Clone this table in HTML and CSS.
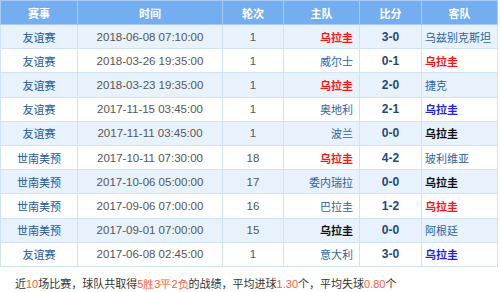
FILE: index.html
```html
<!DOCTYPE html>
<html>
  <head>
    <title>乌拉圭 近期战绩</title>
    <link rel="stylesheet" href="styles.css">
  </head>
  <body>
    <table class="record">
      <colgroup>
        <col class="c-event">
        <col class="c-time">
        <col class="c-round">
        <col class="c-home">
        <col class="c-score">
        <col class="c-away">
      </colgroup>
      <tr class="head">
        <th>赛事</th><th>时间</th><th>轮次</th><th>主队</th><th>比分</th><th>客队</th>
      </tr>
      <tr>
        <td class="event">友谊赛</td><td class="time">2018-06-08 07:10:00</td><td class="round">1</td>
        <td class="home"><span class="win">乌拉圭</span></td><td class="score">3-0</td><td class="away">乌兹别克斯坦</td>
      </tr>
      <tr>
        <td class="event">友谊赛</td><td class="time">2018-03-26 19:35:00</td><td class="round">1</td>
        <td class="home">威尔士</td><td class="score">0-1</td><td class="away"><span class="win">乌拉圭</span></td>
      </tr>
      <tr>
        <td class="event">友谊赛</td><td class="time">2018-03-23 19:35:00</td><td class="round">1</td>
        <td class="home"><span class="win">乌拉圭</span></td><td class="score">2-0</td><td class="away">捷克</td>
      </tr>
      <tr>
        <td class="event">友谊赛</td><td class="time">2017-11-15 03:45:00</td><td class="round">1</td>
        <td class="home">奥地利</td><td class="score">2-1</td><td class="away"><span class="lose">乌拉圭</span></td>
      </tr>
      <tr>
        <td class="event">友谊赛</td><td class="time">2017-11-11 03:45:00</td><td class="round">1</td>
        <td class="home">波兰</td><td class="score">0-0</td><td class="away"><span class="draw">乌拉圭</span></td>
      </tr>
      <tr>
        <td class="event">世南美预</td><td class="time">2017-10-11 07:30:00</td><td class="round">18</td>
        <td class="home"><span class="win">乌拉圭</span></td><td class="score">4-2</td><td class="away">玻利维亚</td>
      </tr>
      <tr>
        <td class="event">世南美预</td><td class="time">2017-10-06 05:00:00</td><td class="round">17</td>
        <td class="home">委内瑞拉</td><td class="score">0-0</td><td class="away"><span class="draw">乌拉圭</span></td>
      </tr>
      <tr>
        <td class="event">世南美预</td><td class="time">2017-09-06 07:00:00</td><td class="round">16</td>
        <td class="home">巴拉圭</td><td class="score">1-2</td><td class="away"><span class="win">乌拉圭</span></td>
      </tr>
      <tr>
        <td class="event">世南美预</td><td class="time">2017-09-01 07:00:00</td><td class="round">15</td>
        <td class="home"><span class="draw">乌拉圭</span></td><td class="score">0-0</td><td class="away">阿根廷</td>
      </tr>
      <tr>
        <td class="event">友谊赛</td><td class="time">2017-06-08 02:45:00</td><td class="round">1</td>
        <td class="home">意大利</td><td class="score">3-0</td><td class="away"><span class="lose">乌拉圭</span></td>
      </tr>
    </table>
    <p class="summary">
      近<em>10</em>场比赛，球队共取得<em>5胜3平2负</em>的战绩，平均进球<em>1.30</em>个，平均失球<em>0.80</em>个
    </p>
  </body>
</html>
```

FILE: styles.css
```css
body {
  margin: 0;
  background-color: #ffffff;
  font-family: "Noto Sans CJK SC", "Liberation Sans", sans-serif;
  font-size: 11px;
  color: #333333;
}

.record {
  width: 497px;
  border-collapse: collapse;
  table-layout: fixed;
}

.c-event { width: 77px; }
.c-time { width: 145px; }
.c-round { width: 61px; }
.c-home { width: 76px; }
.c-score { width: 62px; }
.c-away { width: 76px; }

.record th,
.record td {
  padding: 0;
  border: 1px solid #cfe2f8;
  white-space: nowrap;
  overflow: hidden;
  line-height: 14px;
}

.head th {
  height: 23px;
  background-color: #74adf0;
  border-color: #a5cbf6;
  color: #ffffff;
  font-weight: bold;
  text-align: center;
}

.record td {
  height: 23.2px;
  text-align: center;
}

.record tr:nth-child(even) td {
  background-color: #e8f2fd;
}

.event {
  color: #1b5797;
}

.time,
.round {
  font-family: "Liberation Sans", sans-serif;
  font-size: 11.5px;
  color: #555555;
}

.record td.home {
  text-align: right;
  padding-right: 6px;
  color: #2d64a0;
}

.record td.away {
  text-align: left;
  padding-left: 3px;
  color: #2d64a0;
}

.score {
  font-family: "Liberation Sans", sans-serif;
  font-size: 12px;
  font-weight: bold;
  color: #1d4a7c;
}

.win {
  color: #ff1414;
  font-weight: bold;
}

.lose {
  color: #1f1fee;
  font-weight: bold;
}

.draw {
  color: #111111;
  font-weight: bold;
}

.summary {
  margin: 0;
  padding: 9px 0 0 15px;
  line-height: 14px;
  color: #333333;
}

.summary em {
  font-style: normal;
  font-family: "Liberation Sans", sans-serif;
  color: #ff5a3c;
}
```
